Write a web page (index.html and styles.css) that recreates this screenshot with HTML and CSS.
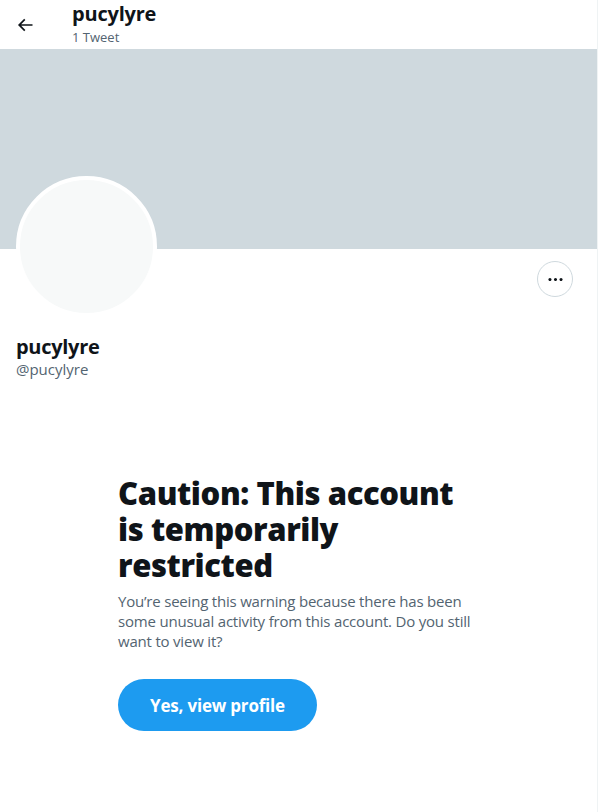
FILE: index.html
```html
<!DOCTYPE html>
<html>
<head>
<meta charset="utf-8">
<link rel="stylesheet" href="styles.css">
</head>
<body>
<div class="column">
  <header class="topbar">
    <div class="back">
      <svg viewBox="0 0 24 24" width="20" height="20"><path d="M7.414 13l5.043 5.04-1.414 1.42L3.586 12l7.457-7.46 1.414 1.42L7.414 11H21v2H7.414z" fill="#0f1419"/></svg>
    </div>
    <div class="titles">
      <div class="title">pucylyre</div>
      <div class="count">1 Tweet</div>
    </div>
  </header>
  <div class="banner"></div>
  <div class="profile">
    <div class="avatar-row">
      <div class="avatar"></div>
      <button class="more" aria-label="More">
        <svg viewBox="0 0 24 24" width="19" height="19"><path d="M3 12c0-1.1.9-2 2-2s2 .9 2 2-.9 2-2 2-2-.9-2-2zm9 2c1.1 0 2-.9 2-2s-.9-2-2-2-2 .9-2 2 .9 2 2 2zm7 0c1.1 0 2-.9 2-2s-.9-2-2-2-2 .9-2 2 .9 2 2 2z" fill="#0f1419"/></svg>
      </button>
    </div>
    <div class="name">pucylyre</div>
    <div class="handle">@pucylyre</div>
  </div>
  <div class="caution">
    <h1>Caution: This account is temporarily restricted</h1>
    <p>You’re seeing this warning because there has been some unusual activity from this account. Do you still want to view it?</p>
    <button class="view">Yes, view profile</button>
  </div>
</div>
</body>
</html>
```
FILE: styles.css
```css
* { box-sizing: border-box; }
html, body { margin: 0; padding: 0; background: #fff; }
body { font-family: "Segoe UI", "Open Sans", "Liberation Sans", sans-serif; color: #0f1419; }
.column { width: 598px; height: 812px; border-right: 1px solid #eff3f4; }
.topbar { height: 49px; display: flex; align-items: flex-start; }
.back { width: 72px; height: 49px; display: flex; align-items: center; justify-content: flex-start; padding-left: 15px; }
.titles { padding-top: 1px; }
.title { font-size: 20px; font-weight: 700; line-height: 26px; letter-spacing: -0.2px; }
.count { font-size: 13px; line-height: 16px; color: #536471; margin-top: 2px; }
.banner { height: 200px; background: #cfd9de; }
.profile { padding: 0 16px; }
.avatar-row { display: flex; justify-content: space-between; align-items: flex-start; height: 84px; }
.avatar { width: 141px; height: 141px; border-radius: 50%; background: #f7f9f9; border: 4px solid #fff; margin-top: -73px; }
.more { width: 36px; height: 36px; border-radius: 50%; border: 1px solid #cfd9de; background: #fff; margin-top: 12px; margin-right: 8px; display: flex; align-items: center; justify-content: center; padding: 0; }
.name { font-size: 20px; font-weight: 700; line-height: 24px; margin-top: 2px; letter-spacing: -0.3px; }
.handle { font-size: 15px; line-height: 20px; color: #536471; }
.caution { width: 362px; margin: 96px 0 0 118px; }
.caution h1 { font-size: 31px; line-height: 36px; font-weight: 800; margin: 0; letter-spacing: -0.4px; }
.caution p { font-size: 15px; line-height: 20px; color: #536471; margin: 8px 0 0; letter-spacing: -0.2px; }
.view { margin-top: 28px; width: 199px; height: 52px; border-radius: 26px; border: 0; background: #1d9bf0; color: #fff; font-family: inherit; font-size: 17px; font-weight: 700; letter-spacing: -0.2px; }
```
